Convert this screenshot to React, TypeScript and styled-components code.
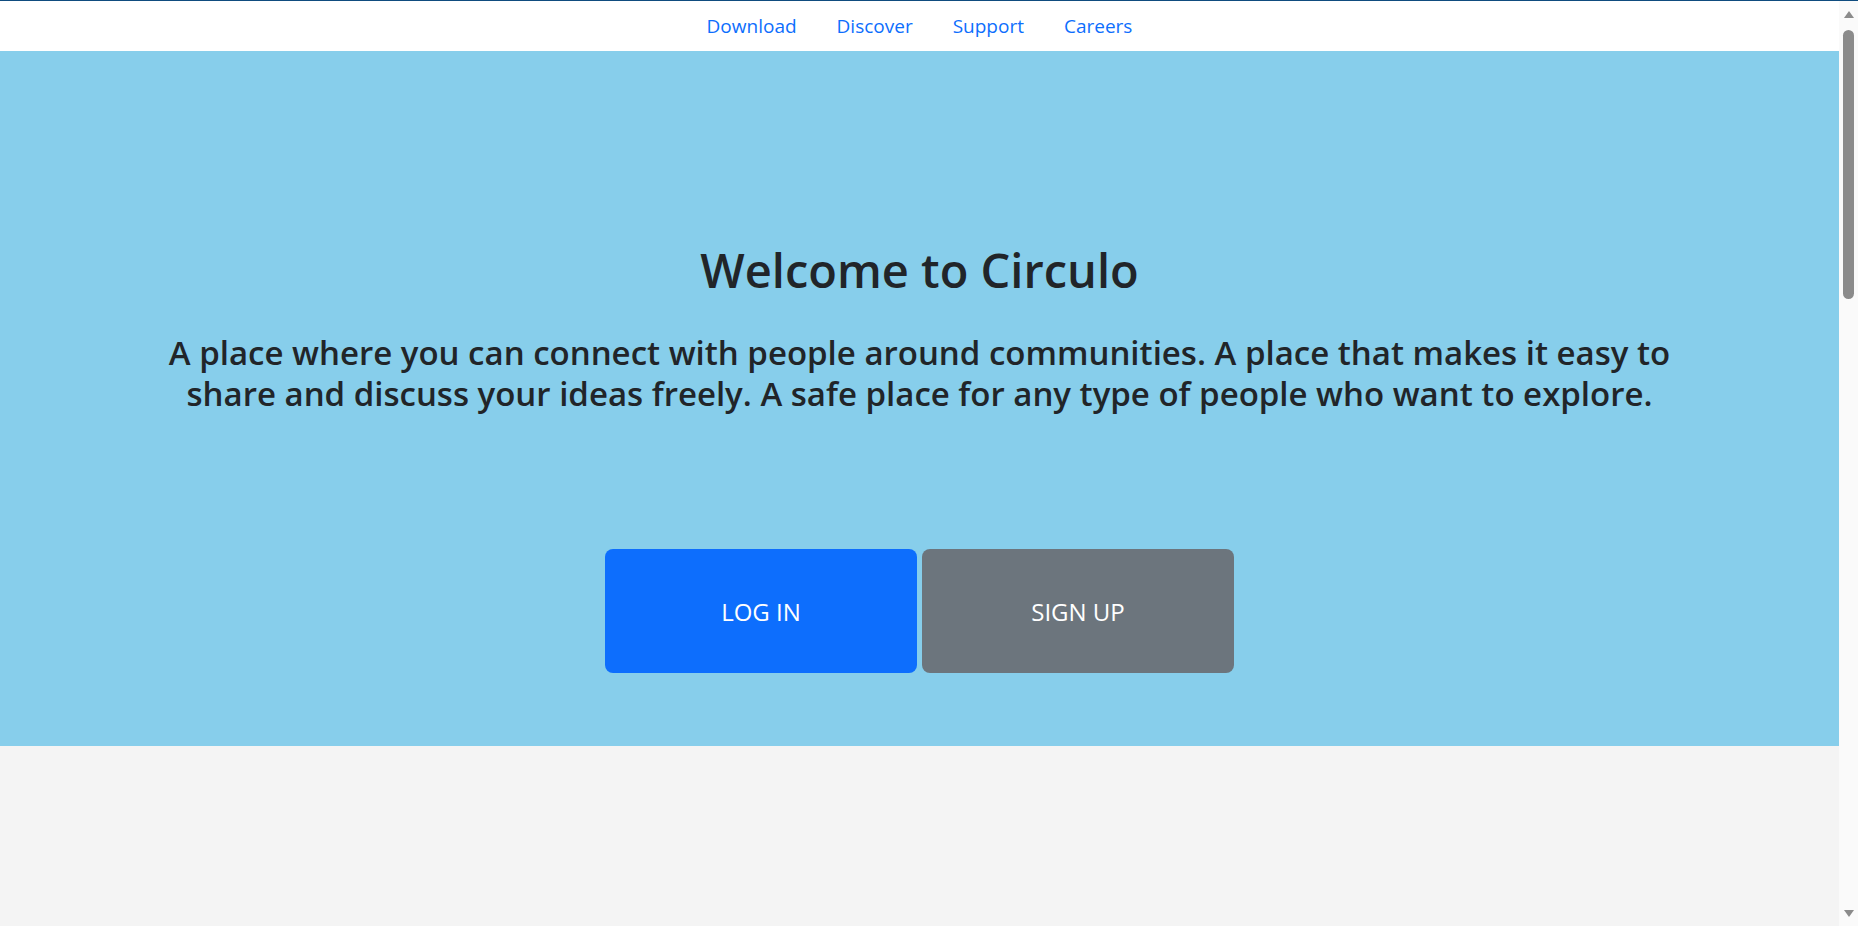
import React from "react";
import styled, { createGlobalStyle } from "styled-components";

const GlobalStyle = createGlobalStyle`
  html, body {
    margin: 0;
    padding: 0;
    height: 100%;
    overflow: hidden;
    background: #f4f4f4;
  }
  body {
    font-family: "Segoe UI", "Open Sans", "Noto Sans", sans-serif;
    color: #212529;
  }
  * { box-sizing: border-box; }
`;

const Viewport = styled.div`
  display: flex;
  height: 100vh;
  border-top: 1px solid #0f4c7f;
`;

const Page = styled.div`
  flex: 1;
  min-width: 0;
  display: flex;
  flex-direction: column;
  overflow: hidden;
`;

const ScrollRail = styled.div`
  width: 19px;
  flex-shrink: 0;
  background: #fafafa;
  display: flex;
  flex-direction: column;
  align-items: center;
  padding: 10px 0 9px;
`;

const Arrow = styled.div<{ $dir: "up" | "down" }>`
  width: 0;
  height: 0;
  border-left: 5.5px solid transparent;
  border-right: 5.5px solid transparent;
  ${(p) =>
    p.$dir === "up"
      ? "border-bottom: 7px solid #8b8b8b;"
      : "border-top: 7px solid #8b8b8b; margin-top: auto;"}
`;

const Thumb = styled.div`
  width: 11px;
  height: 269px;
  margin-top: 12px;
  border-radius: 6px;
  background: #8b8b8b;
`;

const NavBar = styled.nav`
  height: 50px;
  flex-shrink: 0;
  background: #ffffff;
  display: flex;
  justify-content: center;
  align-items: center;
`;

const NavList = styled.ul`
  display: flex;
  list-style: none;
  margin: 0;
  padding: 0;
`;

const NavLink = styled.a`
  display: block;
  padding: 10px 20px;
  font-size: 19px;
  line-height: 30px;
  color: #0d6efd;
  text-decoration: none;
`;

const Hero = styled.section`
  height: 695px;
  flex-shrink: 0;
  background: #87ceeb;
  display: flex;
  flex-direction: column;
  align-items: center;
  padding-top: 189px;
`;

const Title = styled.h1`
  margin: 0;
  font-size: 47px;
  font-weight: 600;
  line-height: 60px;
  text-align: center;
`;

const Lead = styled.h3`
  margin: 32px 0 0;
  max-width: 1540px;
  font-size: 33px;
  font-weight: 600;
  line-height: 41px;
  text-align: center;
`;

const ButtonRow = styled.div`
  display: flex;
  gap: 5px;
  margin-top: 135px;
`;

const Button = styled.button<{ $variant: "primary" | "secondary" }>`
  width: 312px;
  height: 124px;
  border: none;
  border-radius: 8px;
  background: ${(p) => (p.$variant === "primary" ? "#0d6efd" : "#6c757d")};
  color: #ffffff;
  font-family: inherit;
  font-size: 24px;
  cursor: pointer;
`;

const Lower = styled.section`
  flex: 1;
  background: #f4f4f4;
`;

export default function App() {
  return (
    <>
      <GlobalStyle />
      <Viewport>
        <Page>
          <NavBar>
            <NavList>
              {["Download", "Discover", "Support", "Careers"].map((l) => (
                <li key={l}>
                  <NavLink href="#">{l}</NavLink>
                </li>
              ))}
            </NavList>
          </NavBar>
          <Hero>
            <Title>Welcome to Circulo</Title>
            <Lead>
              A place where you can connect with people around communities. A place that makes it easy to share and
              discuss your ideas freely. A safe place for any type of people who want to explore.
            </Lead>
            <ButtonRow>
              <Button $variant="primary">LOG IN</Button>
              <Button $variant="secondary">SIGN UP</Button>
            </ButtonRow>
          </Hero>
          <Lower />
        </Page>
        <ScrollRail aria-hidden="true">
          <Arrow $dir="up" />
          <Thumb />
          <Arrow $dir="down" />
        </ScrollRail>
      </Viewport>
    </>
  );
}
